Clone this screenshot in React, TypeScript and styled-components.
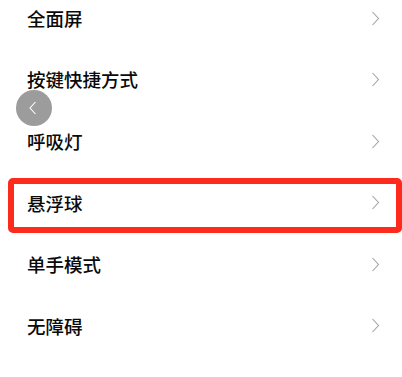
import React from "react";
import styled, { createGlobalStyle } from "styled-components";

const Global = createGlobalStyle`
  html, body { margin: 0; padding: 0; background: #ffffff; }
  body { width: 402px; height: 377px; overflow: hidden; }
`;

const Page = styled.div`
  position: relative;
  width: 402px;
  height: 377px;
  overflow: hidden;
  background: #ffffff;
  font-family: "Noto Sans CJK SC", "Noto Sans", sans-serif;
`;

const List = styled.ul`
  list-style: none;
  margin: -12.8px 0 0 0;
  padding: 0;
  display: flex;
  flex-direction: column;
`;

const Row = styled.li`
  position: relative;
  height: 61.6px;
  display: flex;
  align-items: center;
  justify-content: space-between;
  padding: 0 22px 0 27px;
  box-sizing: border-box;
`;

const Label = styled.span`
  font-size: 18.5px;
  font-weight: 500;
  line-height: 1;
  color: #0a0a0a;
`;

const Highlight = styled.div`
  position: absolute;
  left: 8px;
  right: 0;
  top: 6px;
  bottom: 0.6px;
  border: 6px solid #fe2a1c;
  border-radius: 5px;
  pointer-events: none;
`;

const FloatBall = styled.div`
  position: absolute;
  left: 16px;
  top: 90px;
  width: 36px;
  height: 36px;
  border-radius: 50%;
  background: #9c9c9c;
  display: flex;
  align-items: center;
  justify-content: center;
`;

const Chevron = () => (
  <svg width="9" height="15" viewBox="0 0 9 15" fill="none">
    <path d="M1.5 1 L7.5 7.5 L1.5 14" stroke="#a3a3a3" strokeWidth="1.1" />
  </svg>
);

const BackChevron = () => (
  <svg width="10" height="14" viewBox="0 0 10 14" fill="none" style={{ marginLeft: -2 }}>
    <path d="M7.5 1 L2 7 L7.5 13" stroke="#ffffff" strokeWidth="1.1" />
  </svg>
);

const items = ["全面屏", "按键快捷方式", "呼吸灯", "悬浮球", "单手模式", "无障碍"];

export default function App() {
  return (
    <Page>
      <Global />
      <List>
        {items.map((t) => (
          <Row key={t}>
            <Label>{t}</Label>
            <Chevron />
            {t === "悬浮球" && <Highlight />}
          </Row>
        ))}
      </List>
      <FloatBall>
        <BackChevron />
      </FloatBall>
    </Page>
  );
}
